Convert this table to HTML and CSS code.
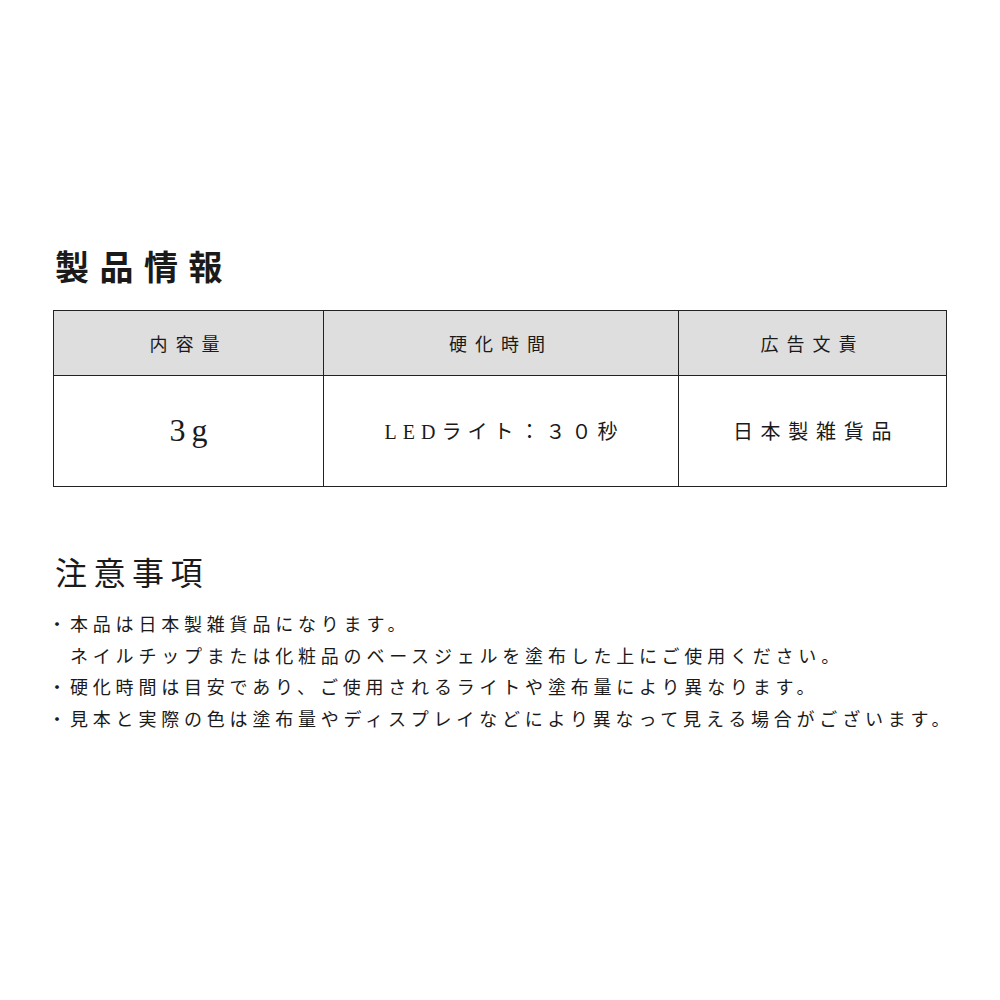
FILE: index.html
```html
<!DOCTYPE html>
<html lang="ja">
<head>
<meta charset="utf-8">
<link rel="stylesheet" href="styles.css">
</head>
<body>
<div class="page">
  <h1 class="title">製品情報</h1>
  <table class="spec">
    <colgroup>
      <col class="c1">
      <col class="c2">
      <col class="c3">
    </colgroup>
    <tr class="head">
      <th>内容量</th>
      <th>硬化時間</th>
      <th>広告文責</th>
    </tr>
    <tr class="body">
      <td class="big">3g</td>
      <td>LEDライト：３０秒</td>
      <td class="jp">日本製雑貨品</td>
    </tr>
  </table>
  <h2 class="title2">注意事項</h2>
  <ul class="notes">
    <li><span class="dot">・</span><span class="txt">本品は日本製雑貨品になります。<br>ネイルチップまたは化粧品のベースジェルを塗布した上にご使用ください。</span></li>
    <li><span class="dot">・</span><span class="txt">硬化時間は目安であり、ご使用されるライトや塗布量により異なります。</span></li>
    <li><span class="dot">・</span><span class="txt">見本と実際の色は塗布量やディスプレイなどにより異なって見える場合がございます。</span></li>
  </ul>
</div>
</body>
</html>
```
FILE: styles.css
```css
html, body {
  margin: 0;
  padding: 0;
  background: #fff;
}
body {
  font-family: "Liberation Serif", "Noto Sans CJK JP", serif;
  color: #1a1a1a;
}
.page {
  padding: 246px 54px 0 53px;
}
.title {
  margin: 0 0 24px 0;
  padding-left: 2px;
  font-size: 34px;
  line-height: 40px;
  height: 40px;
  font-weight: 700;
  letter-spacing: 10.5px;
  font-family: "Noto Sans CJK JP", serif;
}
.spec {
  width: 893px;
  border-collapse: collapse;
  table-layout: fixed;
}
.spec th, .spec td {
  border: 1px solid #222;
  text-align: center;
  padding: 0;
  font-family: "Liberation Serif", "Noto Sans CJK JP", serif;
}
.c1 { width: 270px; }
.c2 { width: 355px; }
.c3 { width: 268px; }
.head th {
  background: #dedede;
  height: 64px;
  font-size: 18px;
  font-weight: 400;
  letter-spacing: 8px;
  padding-left: 0;
  font-family: "Noto Sans CJK JP", serif;
}
.body td {
  height: 108px;
  font-size: 20px;
  letter-spacing: 6px;
  padding-left: 6px;
  padding-bottom: 2px;
}
.body td.jp {
  letter-spacing: 7.7px;
  padding-left: 7px;
}
.body td.big {
  font-size: 32px;
  letter-spacing: 6px;
  padding-left: 6px;
}
.title2 {
  margin: 64px 0 0 0;
  padding-left: 2px;
  font-size: 32px;
  line-height: 40px;
  height: 40px;
  font-weight: 400;
  letter-spacing: 6.5px;
  font-family: "Noto Sans CJK JP", serif;
}
.notes {
  list-style: none;
  margin: 17px 0 0 0;
  padding: 0;
  font-family: "Noto Sans CJK JP", serif;
  font-size: 18px;
  line-height: 31.5px;
  letter-spacing: 4.8px;
}
.notes li {
  display: flex;
}
.dot {
  flex: none;
  width: 22px;
  margin-left: -5px;
  letter-spacing: 0;
}
.txt {
  white-space: nowrap;
}
```
